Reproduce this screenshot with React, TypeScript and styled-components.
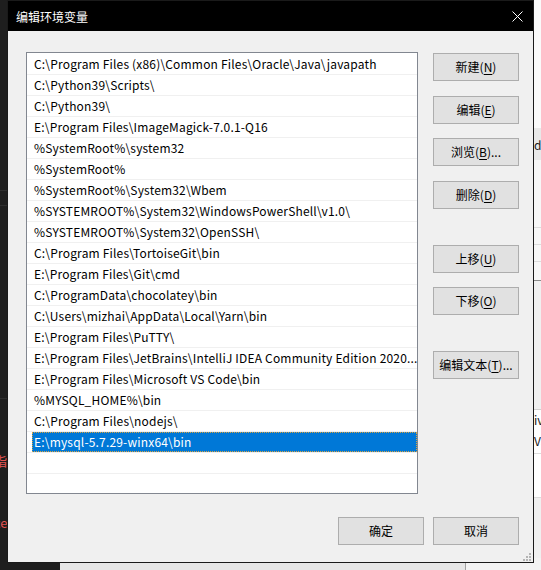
import React from "react";
import styled, { createGlobalStyle } from "styled-components";

const FONT = `"Microsoft YaHei UI", "Noto Sans CJK SC", "Noto Sans", sans-serif`;

const GlobalStyle = createGlobalStyle`
  html, body { margin: 0; padding: 0; background: #1c1c1c; overflow: hidden; }
  * { box-sizing: border-box; }
`;

const Desktop = styled.div`
  position: relative;
  width: 541px;
  height: 570px;
  overflow: hidden;
  background: #1c1c1c;
  font-family: ${FONT};
`;

/* ---------- background windows (partially hidden) ---------- */
const DarkWindow = styled.div`
  position: absolute;
  left: 0;
  top: 0;
  width: 60px;
  height: 570px;
  background: #1e1e1e;
  display: flex;
  flex-direction: column;
`;

const DarkLine = styled.div<{ $top: number }>`
  margin-top: ${(p) => p.$top}px;
  height: 1px;
  background: #2e2e2e;
`;

const RedText = styled.div<{ $top: number }>`
  margin-top: ${(p) => p.$top}px;
  margin-left: -6px;
  color: #e05252;
  font-size: 13px;
  line-height: 16px;
  white-space: nowrap;
`;

const LightWindow = styled.div`
  position: absolute;
  left: 60px;
  top: 0;
  width: 481px;
  height: 570px;
  background: #f3f3f3;
  display: flex;
  flex-direction: column;
`;

const LightBand = styled.div<{ $h: number; $bg: string; $border?: string }>`
  height: ${(p) => p.$h}px;
  flex: none;
  background: ${(p) => p.$bg};
  border-bottom: ${(p) => (p.$border ? `1px solid ${p.$border}` : "none")};
  display: flex;
  align-items: center;
  padding-left: 474px;
  font-size: 12px;
  color: #1a1a1a;
  white-space: nowrap;
`;

const BottomGray = styled.div`
  position: absolute;
  left: 60px;
  top: 563px;
  width: 406px;
  height: 7px;
  background: #e6e6e6;
  border-right: 1px solid #a0a0a0;
`;

/* ---------- dialog ---------- */
const Dialog = styled.div`
  position: absolute;
  left: 7px;
  top: 0;
  width: 527px;
  height: 563px;
  border: 1px solid #1a1a1a;
  display: flex;
  flex-direction: column;
  background: #f0f0f0;
`;

const TitleBar = styled.div`
  height: 30px;
  flex: none;
  background: #000;
  color: #fff;
  display: flex;
  align-items: center;
  justify-content: space-between;
  padding-left: 8px;
`;

const Title = styled.span`
  font-size: 12px;
  line-height: 16px;
  margin-top: 1px;
`;

const CloseBox = styled.div`
  width: 31px;
  height: 30px;
  display: flex;
  align-items: center;
  justify-content: center;
`;

const Body = styled.div`
  position: relative;
  flex: 1;
  display: flex;
  flex-direction: column;
  padding: 21px 14px 17px 18px;
`;

const Main = styled.div`
  display: flex;
  align-items: flex-start;
  gap: 15px;
`;

const ListBox = styled.div`
  width: 392px;
  height: 442px;
  flex: none;
  background: #fff;
  border: 1px solid #828790;
  padding-top: 1px;
  overflow: hidden;
`;

const Row = styled.div`
  height: 21px;
  border-bottom: 1px solid #f0f0f0;
  padding-left: 5px;
  display: flex;
`;

const Item = styled.div<{ $selected?: boolean }>`
  flex: 1;
  min-width: 0;
  height: 20px;
  padding-left: 2px;
  padding-right: 0;
  font-size: 12px;
  letter-spacing: 0.18px;
  line-height: 20px;
  color: ${(p) => (p.$selected ? "#fff" : "#000")};
  background: ${(p) => (p.$selected ? "#0078d7" : "transparent")};
  outline: ${(p) => (p.$selected ? "1px dotted #d9a441" : "none")};
  outline-offset: -1px;
  white-space: nowrap;
  overflow: hidden;
`;

const SideButtons = styled.div`
  width: 86px;
  flex: none;
  display: flex;
  flex-direction: column;
`;

const Button = styled.div<{ $gap?: number }>`
  width: 86px;
  height: 28px;
  flex: none;
  margin-top: ${(p) => p.$gap ?? 0}px;
  background: #e1e1e1;
  border: 1px solid #adadad;
  display: flex;
  align-items: center;
  justify-content: center;
  font-size: 12px;
  color: #000;
  white-space: nowrap;
  line-height: 16px;
`;

const Key = styled.span`
  text-decoration: underline;
  text-underline-offset: 2px;
`;

const Footer = styled.div`
  margin-top: auto;
  display: flex;
  justify-content: flex-end;
  gap: 9px;
`;

const Grip = styled.svg`
  position: absolute;
  right: 2px;
  bottom: 1px;
`;

const paths = [
  "C:\\Program Files (x86)\\Common Files\\Oracle\\Java\\javapath",
  "C:\\Python39\\Scripts\\",
  "C:\\Python39\\",
  "E:\\Program Files\\ImageMagick-7.0.1-Q16",
  "%SystemRoot%\\system32",
  "%SystemRoot%",
  "%SystemRoot%\\System32\\Wbem",
  "%SYSTEMROOT%\\System32\\WindowsPowerShell\\v1.0\\",
  "%SYSTEMROOT%\\System32\\OpenSSH\\",
  "C:\\Program Files\\TortoiseGit\\bin",
  "E:\\Program Files\\Git\\cmd",
  "C:\\ProgramData\\chocolatey\\bin",
  "C:\\Users\\mizhai\\AppData\\Local\\Yarn\\bin",
  "E:\\Program Files\\PuTTY\\",
  "E:\\Program Files\\JetBrains\\IntelliJ IDEA Community Edition 2020...",
  "E:\\Program Files\\Microsoft VS Code\\bin",
  "%MYSQL_HOME%\\bin",
  "C:\\Program Files\\nodejs\\",
  "E:\\mysql-5.7.29-winx64\\bin",
];

const sideButtons: { label: string; key: string; tail?: string; gap: number }[] = [
  { label: "新建", key: "N", gap: 1 },
  { label: "编辑", key: "E", gap: 15 },
  { label: "浏览", key: "B", tail: "...", gap: 14 },
  { label: "删除", key: "D", gap: 15 },
  { label: "上移", key: "U", gap: 36 },
  { label: "下移", key: "O", gap: 14 },
  { label: "编辑文本", key: "T", tail: "...", gap: 36 },
];

export default function App() {
  return (
    <>
      <GlobalStyle />
      <Desktop>
        <DarkWindow>
          <DarkLine $top={190} />
          <DarkLine $top={14} />
          <DarkLine $top={192} />
          <RedText $top={54}>指</RedText>
          <RedText $top={46}>ce</RedText>
        </DarkWindow>
        <LightWindow>
          <LightBand $h={128} $bg="#fafafa" />
          <LightBand $h={32} $bg="#e8e8e8">d</LightBand>
          <LightBand $h={68} $bg="#f7f7f7" $border="#dcdcdc" />
          <LightBand $h={17} $bg="#f7f7f7" $border="#dcdcdc" />
          <LightBand $h={17} $bg="#f7f7f7" $border="#dcdcdc" />
          <LightBand $h={19} $bg="#f7f7f7" $border="#8a8a8a" />
          <LightBand $h={129} $bg="#f0f0f0" $border="#d0d0d0" />
          <LightBand $h={18} $bg="#ffffff">iv</LightBand>
          <LightBand $h={26} $bg="#ffffff" $border="#dcdcdc">VS</LightBand>
          <LightBand $h={44} $bg="#ffffff" $border="#dcdcdc" />
          <LightBand $h={60} $bg="#f0f0f0" />
        </LightWindow>
        <BottomGray />

        <Dialog>
          <TitleBar>
            <Title>编辑环境变量</Title>
            <CloseBox>
              <svg width="11" height="11" viewBox="0 0 11 11">
                <path d="M0.5 0.5 L10.5 10.5 M10.5 0.5 L0.5 10.5" stroke="#fff" strokeWidth="1" />
              </svg>
            </CloseBox>
          </TitleBar>
          <Body>
            <Main>
              <ListBox>
                {paths.map((p, i) => (
                  <Row key={i}>
                    <Item $selected={i === paths.length - 1}>{p}</Item>
                  </Row>
                ))}
                <Row>
                  <Item />
                </Row>
              </ListBox>
              <SideButtons>
                {sideButtons.map((b) => (
                  <Button key={b.label} $gap={b.gap}>
                    {b.label}(<Key>{b.key}</Key>){b.tail ?? ""}
                  </Button>
                ))}
              </SideButtons>
            </Main>
            <Footer>
              <Button>确定</Button>
              <Button>取消</Button>
            </Footer>
            <Grip width="9" height="9" viewBox="0 0 9 9">
              <rect x="7" y="1" width="2" height="2" fill="#b4b4b4" />
              <rect x="4" y="4" width="2" height="2" fill="#b4b4b4" />
              <rect x="7" y="4" width="2" height="2" fill="#b4b4b4" />
              <rect x="1" y="7" width="2" height="2" fill="#b4b4b4" />
              <rect x="4" y="7" width="2" height="2" fill="#b4b4b4" />
              <rect x="7" y="7" width="2" height="2" fill="#b4b4b4" />
            </Grip>
          </Body>
        </Dialog>
      </Desktop>
    </>
  );
}
